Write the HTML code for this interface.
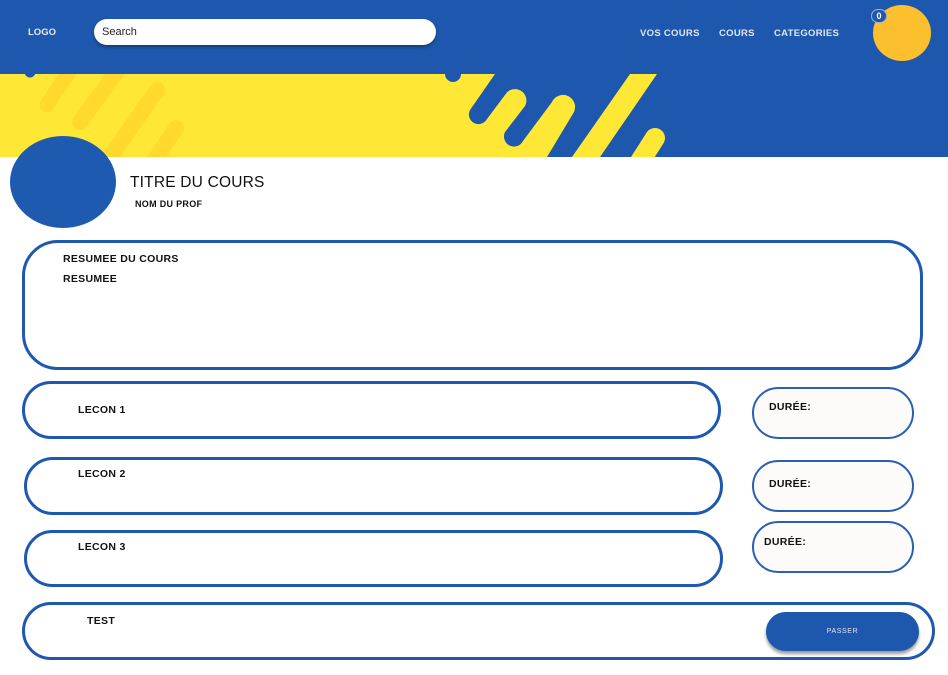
<!DOCTYPE html>
<html><head><meta charset="utf-8"><style>
*{margin:0;padding:0;box-sizing:border-box}
body{width:948px;height:675px;background:#fff;font-family:"Liberation Sans",sans-serif;position:relative;overflow:hidden;color:#111}
.a{position:absolute}
.nav{font-size:9.5px;font-weight:bold;color:#dfe6f3;letter-spacing:.3px;top:28px}
.box{position:absolute;border:3px solid #1e58b0;border-radius:32px;background:#fff}
.d{position:absolute;border:2px solid #2a5fb5;border-radius:27px;background:#fcfbfa;left:752px;width:162px;height:52px}
.t{position:absolute;font-size:10.5px;font-weight:bold;letter-spacing:.3px}
</style></head><body>
<div class="a" style="left:0;top:0;width:948px;height:74px;background:#1d58ae"></div>
<svg class="a" style="left:0;top:74px" width="948" height="83" viewBox="0 74 948 83">
<rect x="0" y="74" width="948" height="83" fill="#1d58ae"/>
<path d="M0,74 H445 A8,8 0 0 0 461,74 H495 L470,110 A9,9 0 0 0 487,119 L505,95 A11,11 0 0 1 525,106 L505,132 A10,10 0 0 0 523,141 L552,102 A12,12 0 0 1 574,112 L547,157 H0 Z" fill="#ffe835"/>
<g stroke-linecap="round" fill="none">
<line x1="30" y1="60" x2="30" y2="72" stroke="#1d58ae" stroke-width="11"/>
<line x1="655" y1="138" x2="625" y2="185" stroke="#ffe835" stroke-width="20"/>
<line x1="70" y1="70" x2="47" y2="105" stroke="#ffd92e" stroke-width="15"/>
<line x1="118" y1="70" x2="80" y2="122" stroke="#ffd92e" stroke-width="16"/>
<line x1="157" y1="90" x2="108" y2="160" stroke="#ffd92e" stroke-width="16"/>
<line x1="176" y1="128" x2="148" y2="170" stroke="#ffd92e" stroke-width="16"/>
</g>
<polygon points="630,74 657,74 600,157 572,157" fill="#ffe835"/>
</svg>
<div class="a" style="left:28px;top:27px;font-size:9.5px;font-weight:bold;color:#e5ebf5">LOGO</div>
<div class="a" style="left:94px;top:19px;width:342px;height:26px;background:#fff;border-radius:13px;box-shadow:0 2px 3px rgba(0,0,0,.35);font-size:11px;padding:7px 8px;color:#222">Search</div>
<div class="a nav" style="left:640px">VOS COURS</div>
<div class="a nav" style="left:719px">COURS</div>
<div class="a nav" style="left:774px">CATEGORIES</div>
<div class="a" style="left:873px;top:5px;width:58px;height:56px;border-radius:50%;background:#fcbf2e"></div>
<div class="a" style="left:871px;top:9px;width:16px;height:14px;border-radius:8px;background:#1d58ae;border:1px solid #aab;color:#fff;font-size:9px;font-weight:bold;text-align:center;line-height:12px">0</div>
<div class="a" style="left:10px;top:136px;width:106px;height:92px;border-radius:50%;background:#1e5ab0"></div>
<div class="a" style="left:130px;top:174px;font-size:15.5px;letter-spacing:.2px">TITRE DU COURS</div>
<div class="a" style="left:135px;top:199px;font-size:9px;font-weight:bold;letter-spacing:.3px">NOM DU PROF</div>
<div class="box" style="left:22px;top:240px;width:901px;height:130px;border-radius:36px"></div>
<div class="t" style="left:63px;top:253px">RESUMEE DU COURS</div>
<div class="t" style="left:63px;top:273px">RESUMEE</div>
<div class="box" style="left:22px;top:381px;width:699px;height:58px;border-radius:29px"></div>
<div class="t" style="left:78px;top:404px">LECON 1</div>
<div class="box" style="left:24px;top:457px;width:699px;height:58px;border-radius:29px"></div>
<div class="t" style="left:78px;top:468px">LECON 2</div>
<div class="box" style="left:24px;top:530px;width:699px;height:57px;border-radius:29px"></div>
<div class="t" style="left:78px;top:541px">LECON 3</div>
<div class="d" style="top:387px"></div><div class="t" style="left:769px;top:401px">DURÉE:</div>
<div class="d" style="top:460px"></div><div class="t" style="left:769px;top:478px">DURÉE:</div>
<div class="d" style="top:521px"></div><div class="t" style="left:764px;top:536px">DURÉE:</div>
<div class="box" style="left:22px;top:602px;width:913px;height:58px;border-radius:29px"></div>
<div class="t" style="left:87px;top:615px">TEST</div>
<div class="a" style="left:766px;top:612px;width:153px;height:39px;border-radius:20px;background:#1d58ae;box-shadow:0 3px 3px rgba(0,0,0,.4);color:#dfe6f3;font-size:7px;letter-spacing:.6px;text-align:center;line-height:39px">PASSER</div>
</body></html>
